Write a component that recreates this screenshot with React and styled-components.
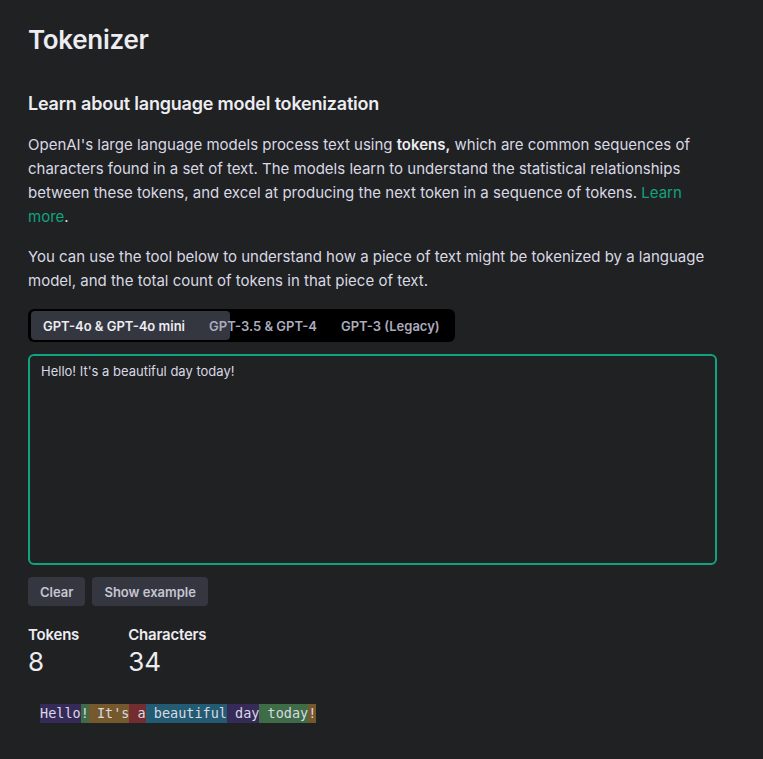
import React, {useState} from 'react';
import styled, {createGlobalStyle} from "styled-components";

const GlobalStyle = createGlobalStyle`
    html, body {
        margin: 0;
        padding: 0;
        background: #202123;
    }
    body {
        font-family: Inter, "Noto Sans", sans-serif;
        color: #ececf1;
    }
`;

const Page = styled.div`
    padding: 22px 28px 28px 28px;
    width: 689px;
    min-height: 709px;
    background: #202123;
`;

const Title = styled.h1`
    margin: 0;
    font-size: 26px;
    line-height: 36px;
    font-weight: 600;
    letter-spacing: -0.3px;
    color: #ececf1;
`;

const Heading = styled.h2`
    margin: 32px 0 0 0;
    font-size: 18px;
    line-height: 28px;
    font-weight: 600;
    letter-spacing: -0.2px;
    color: #ececf1;
`;

const Paragraph = styled.p`
    margin: ${(props) => props.$top || 0}px 0 0 0;
    font-size: 15px;
    line-height: 24px;
    color: #d9d9e3;

    b {
        font-weight: 600;
        color: #ececf1;
    }
`;

const Link = styled.a`
    color: #10a37f;
    text-decoration: none;
`;

const TabBar = styled.div`
    position: relative;
    margin-top: 16px;
    display: inline-flex;
    padding: 2px 3px;
    background: #000;
    border-radius: 6px;
`;

const Indicator = styled.div`
    position: absolute;
    top: 2px;
    left: 3px;
    height: 29px;
    width: 199px;
    border-radius: 4px;
    background: #353740;
`;

const Tab = styled.button`
    position: relative;
    border: none;
    padding: 0 12px;
    height: 29px;
    font-family: inherit;
    font-size: 13px;
    font-weight: 600;
    background: transparent;
    color: ${(props) => (props.$active ? "#ececf1" : "#acacbe")};
    cursor: pointer;
`;

const TextArea = styled.textarea`
    display: block;
    box-sizing: border-box;
    margin-top: 12px;
    width: 689px;
    height: 211px;
    padding: 5px 11px;
    background: #202123;
    border: 2px solid #10a37f;
    border-radius: 6px;
    resize: none;
    outline: none;
    font-family: inherit;
    font-size: 13px;
    line-height: 20px;
    color: #d9d9e3;
`;

const ButtonRow = styled.div`
    margin-top: 12px;
    display: flex;
    gap: 7px;
`;

const Button = styled.button`
    border: none;
    border-radius: 4px;
    height: 29px;
    padding: 0 12px;
    background: #353740;
    color: #c5c5d2;
    font-family: inherit;
    font-size: 13px;
    font-weight: 600;
    cursor: pointer;
`;

const Stats = styled.div`
    margin-top: 20px;
    display: flex;
    gap: 49px;
`;

const Stat = styled.div`
    display: flex;
    flex-direction: column;
`;

const StatLabel = styled.div`
    font-size: 15px;
    line-height: 18px;
    font-weight: 600;
    letter-spacing: -0.2px;
    color: #ececf1;
`;

const StatValue = styled.div`
    margin-top: 3px;
    font-size: 26px;
    line-height: 30px;
    font-weight: 400;
    color: #ececf1;
`;

const Output = styled.div`
    margin-top: 27px;
    padding-left: 12px;
    font-family: "DejaVu Sans Mono", monospace;
    font-size: 13.5px;
    line-height: 19px;
    white-space: pre;
    color: #d9d9e3;
`;

const Token = styled.span`
    display: inline-block;
    background: ${(props) => props.$color};
`;

const tokenColors = [
    "rgba(107, 64, 216, 0.3)",
    "rgba(104, 222, 122, 0.4)",
    "rgba(244, 172, 54, 0.4)",
    "rgba(239, 65, 70, 0.4)",
    "rgba(39, 181, 234, 0.4)",
];

const tokens = ["Hello", "!", " It's", " a", " beautiful", " day", " today", "!"];

function App() {
    const [text, setText] = useState("Hello! It's a beautiful day today!");
    const [model, setModel] = useState(0);

    const models = ["GPT-4o & GPT-4o mini", "GPT-3.5 & GPT-4", "GPT-3 (Legacy)"];

    return (
        <Page>
            <GlobalStyle/>
            <Title>Tokenizer</Title>
            <Heading>Learn about language model tokenization</Heading>
            <Paragraph $top={15}>
                OpenAI's large language models process text using <b>tokens,</b> which are common sequences of
                characters found in a set of text. The models learn to understand the statistical relationships
                between these tokens, and excel at producing the next token in a sequence of tokens. <Link href="#">Learn more</Link>.
            </Paragraph>
            <Paragraph $top={16}>
                You can use the tool below to understand how a piece of text might be tokenized by a language
                model, and the total count of tokens in that piece of text.
            </Paragraph>

            <div>
                <TabBar>
                    <Indicator/>
                    {models.map((name, i) => (
                        <Tab key={name} $active={model === i} onClick={() => setModel(i)}>
                            {name}
                        </Tab>
                    ))}
                </TabBar>
            </div>

            <TextArea value={text} onChange={(e) => setText(e.target.value)}/>

            <ButtonRow>
                <Button onClick={() => setText("")}>Clear</Button>
                <Button>Show example</Button>
            </ButtonRow>

            <Stats>
                <Stat>
                    <StatLabel>Tokens</StatLabel>
                    <StatValue>{tokens.length}</StatValue>
                </Stat>
                <Stat>
                    <StatLabel>Characters</StatLabel>
                    <StatValue>{text.length}</StatValue>
                </Stat>
            </Stats>

            <Output>
                {tokens.map((t, i) => (
                    <Token key={i} $color={tokenColors[i % tokenColors.length]}>{t}</Token>
                ))}
            </Output>
        </Page>
    );
}

export default App;
